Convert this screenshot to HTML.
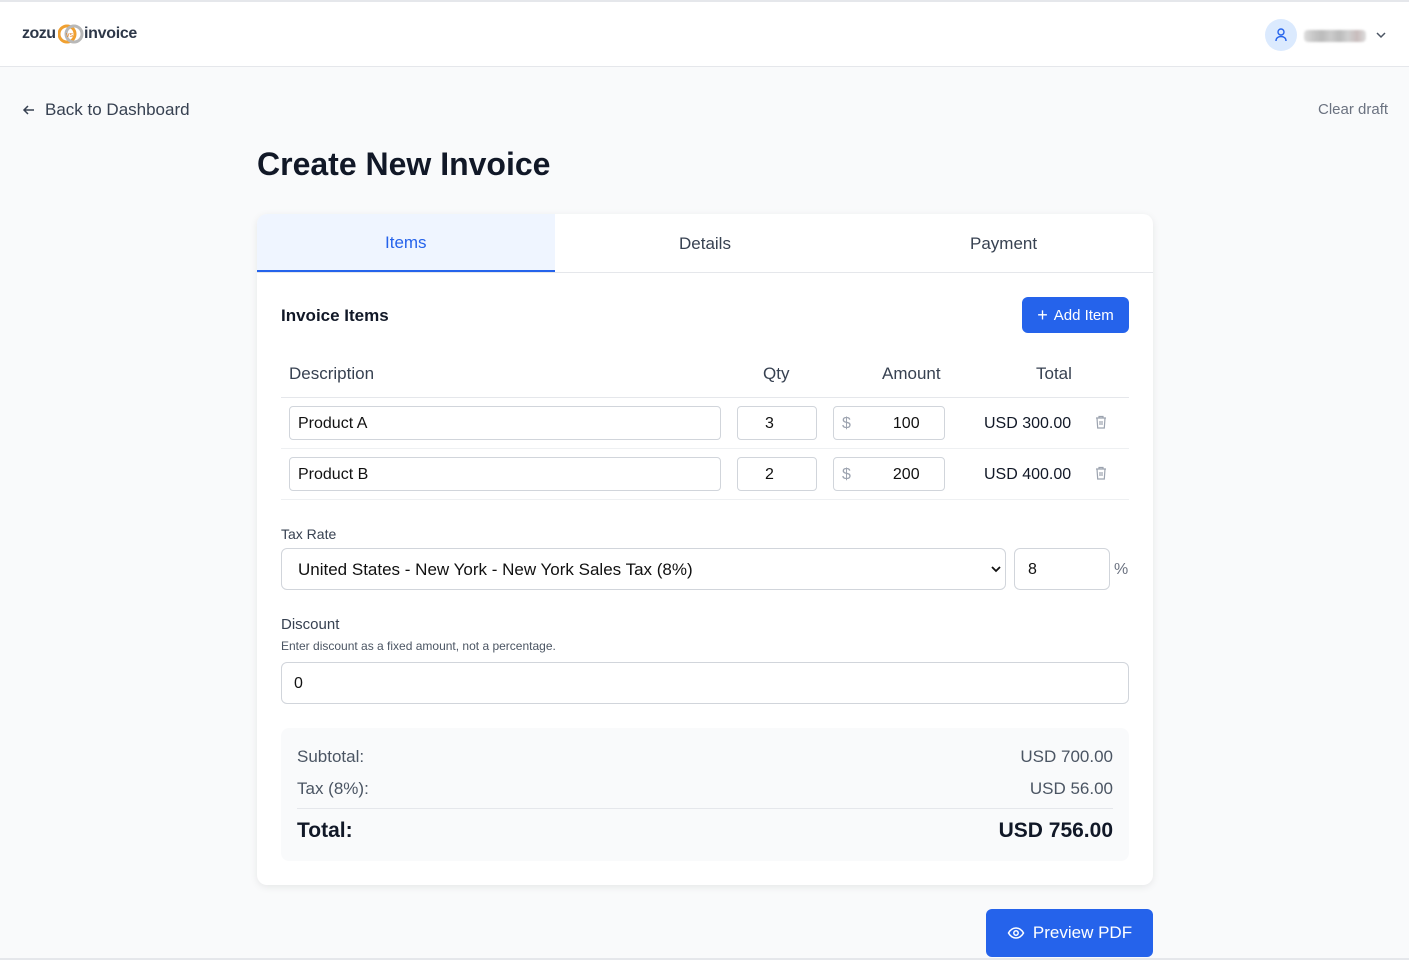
<!DOCTYPE html>
<html><head><meta charset="utf-8"><style>
*{box-sizing:border-box;margin:0;padding:0}
body{width:1409px;height:960px;overflow:hidden;background:#f9fafb;font-family:"Liberation Sans",sans-serif;color:#111827;position:relative}
.a{position:absolute}
.hdr{left:0;top:0;width:1409px;height:67px;background:#fff;border-top:2px solid #e5e7eb;border-bottom:1px solid #e5e7eb}
.card{left:257px;top:214px;width:896px;height:671px;background:#fff;border-radius:10px;box-shadow:0 2px 8px rgba(0,0,0,.08)}
.inp{position:absolute;border:1px solid #d1d5db;border-radius:4px;background:#fff;font-size:16px;color:#111;display:flex;align-items:center;padding-top:2px}
.t16{font-size:16px}
</style></head><body>
<div class="a hdr">
 <div class="a" style="left:22px;top:23px;font-size:16px;font-weight:bold;color:#2d3748;letter-spacing:-0.5px">zozu</div>
 <svg class="a" style="left:58px;top:20px" width="26" height="24" viewBox="0 0 26 24"><circle cx="9" cy="12" r="8" fill="none" stroke="#f0a030" stroke-width="3"/><circle cx="16" cy="12" r="8" fill="none" stroke="#b8b8b8" stroke-width="3"/><text x="8" y="15" font-size="7" fill="#e08020" font-family="Liberation Sans">vs</text></svg>
 <div class="a" style="left:84px;top:23px;font-size:16px;font-weight:bold;color:#2d3748;letter-spacing:-0.3px">invoice</div>
 <div class="a" style="left:1265px;top:17px;width:32px;height:32px;border-radius:50%;background:#dbeafe"></div>
 <svg class="a" style="left:1273px;top:25px" width="16" height="16" viewBox="0 0 16 16" fill="none" stroke="#2563eb" stroke-width="1.4"><circle cx="8" cy="5" r="3"/><path d="M3 14c0-3 2-4.5 5-4.5s5 1.5 5 4.5"/></svg>
 <div class="a" style="left:1304px;top:28px;width:62px;height:12px;background:linear-gradient(90deg,#ddd,#c8c8c8,#bbb,#ccc,#bbb,#d0d0d0,#c8bcbc,#ddd);border-radius:4px;filter:blur(1px)"></div>
 <svg class="a" style="left:1375px;top:28px" width="12" height="10" viewBox="0 0 12 10" fill="none" stroke="#4b5563" stroke-width="1.5"><path d="M2 3l4 4 4-4"/></svg>
</div>
<svg class="a" style="left:21px;top:102px" width="16" height="16" viewBox="0 0 16 16" fill="none" stroke="#374151" stroke-width="1.5"><path d="M13 8H3M7 4L3 8l4 4"/></svg>
<div class="a" style="left:45px;top:100px;font-size:17px;color:#374151">Back to Dashboard</div>
<div class="a" style="left:1318px;top:101px;font-size:15px;color:#6b7280">Clear draft</div>
<div class="a" style="left:257px;top:146px;font-size:32px;font-weight:bold;color:#111827">Create New Invoice</div>

<div class="a card">
 <div class="a" style="left:0;top:0;width:298px;height:58px;background:#eff5ff;border-radius:10px 0 0 0;border-bottom:2px solid #2563eb"></div>
 <div class="a" style="left:0;top:58px;width:896px;height:1px;background:#e5e7eb"></div>
 <div class="a t16" style="left:128px;top:19px;color:#2563eb;font-size:17px">Items</div>
 <div class="a" style="left:422px;top:20px;color:#374151;font-size:17px">Details</div>
 <div class="a" style="left:713px;top:20px;color:#374151;font-size:17px">Payment</div>
 <div class="a" style="left:24px;top:92px;font-size:17px;font-weight:bold">Invoice Items</div>
 <div class="a" style="left:765px;top:83px;width:107px;height:36px;background:#2563eb;border-radius:6px;color:#fff;font-size:15px;display:flex;align-items:center;justify-content:center"><span style="font-size:18px;margin-right:6px">+</span>Add Item</div>
 <div class="a" style="left:32px;top:150px;font-size:17px;color:#374151">Description</div>
 <div class="a" style="left:506px;top:150px;font-size:17px;color:#374151">Qty</div>
 <div class="a" style="left:625px;top:150px;font-size:17px;color:#374151">Amount</div>
 <div class="a" style="left:779px;top:150px;font-size:17px;color:#374151">Total</div>
 <div class="a" style="left:24px;top:183px;width:848px;height:1px;background:#e5e7eb"></div>
 <div class="a" style="left:24px;top:234px;width:848px;height:1px;background:#eef0f2"></div>
 <div class="a" style="left:24px;top:285px;width:848px;height:1px;background:#eef0f2"></div>

 <div class="inp" style="left:32px;top:192px;width:432px;height:34px;padding-left:8px">Product A</div>
 <div class="inp" style="left:480px;top:192px;width:80px;height:34px;padding-left:27px">3</div>
 <div class="inp" style="left:576px;top:192px;width:112px;height:34px;padding-left:8px"><span style="color:#9ca3af">$</span><span style="margin-left:42px">100</span></div>
 <div class="a t16" style="left:727px;top:201px">USD 300.00</div>
 <div class="inp" style="left:32px;top:243px;width:432px;height:34px;padding-left:8px">Product B</div>
 <div class="inp" style="left:480px;top:243px;width:80px;height:34px;padding-left:27px">2</div>
 <div class="inp" style="left:576px;top:243px;width:112px;height:34px;padding-left:8px"><span style="color:#9ca3af">$</span><span style="margin-left:42px">200</span></div>
 <div class="a t16" style="left:727px;top:252px">USD 400.00</div>
 <svg class="a" style="left:836px;top:200px" width="16" height="16" viewBox="0 0 16 16" fill="none" stroke="#9ca3af" stroke-width="1.2"><path d="M3 4h10M6 4V2.5h4V4M4 4l.7 10h6.6L12 4M7 7v4M9 7v4"/></svg>
 <svg class="a" style="left:836px;top:251px" width="16" height="16" viewBox="0 0 16 16" fill="none" stroke="#9ca3af" stroke-width="1.2"><path d="M3 4h10M6 4V2.5h4V4M4 4l.7 10h6.6L12 4M7 7v4M9 7v4"/></svg>

 <div class="a" style="left:24px;top:312px;font-size:14px;color:#374151">Tax Rate</div>
 <div class="inp" style="left:24px;top:334px;width:725px;height:42px;border-radius:6px;padding-left:16px;font-size:17px">United States - New York - New York Sales Tax (8%)
  <svg style="position:absolute;right:4px;top:16px" width="10" height="8" viewBox="0 0 10 8" fill="none" stroke="#111" stroke-width="1.8"><path d="M1 2l4 4 4-4"/></svg></div>
 <div class="inp" style="left:757px;top:334px;width:96px;height:42px;border-radius:6px;padding-left:13px">8</div>
 <div class="a t16" style="left:857px;top:347px;color:#6b7280">%</div>
 <div class="a" style="left:24px;top:402px;font-size:15px;color:#374151">Discount</div>
 <div class="a" style="left:24px;top:425px;font-size:12px;color:#4b5563">Enter discount as a fixed amount, not a percentage.</div>
 <div class="inp" style="left:24px;top:448px;width:848px;height:42px;border-radius:6px;padding-left:12px">0</div>

 <div class="a" style="left:24px;top:514px;width:848px;height:133px;background:#f9fafb;border-radius:8px"></div>
 <div class="a t16" style="left:40px;top:533px;color:#4b5563;font-size:17px">Subtotal:</div>
 <div class="a t16" style="right:40px;top:533px;color:#4b5563;font-size:17px">USD 700.00</div>
 <div class="a t16" style="left:40px;top:565px;color:#4b5563;font-size:17px">Tax (8%):</div>
 <div class="a t16" style="right:40px;top:565px;color:#4b5563;font-size:17px">USD 56.00</div>
 <div class="a" style="left:40px;top:594px;width:816px;height:1px;background:#e5e7eb"></div>
 <div class="a" style="left:40px;top:605px;font-size:21px;font-weight:bold">Total:</div>
 <div class="a" style="right:40px;top:605px;font-size:21px;font-weight:bold">USD 756.00</div>
</div>

<div class="a" style="left:986px;top:909px;width:167px;height:48px;background:#2563eb;border-radius:6px;color:#fff;font-size:17px;display:flex;align-items:center;justify-content:center">
 <svg width="18" height="14" viewBox="0 0 18 14" fill="none" stroke="#fff" stroke-width="1.5" style="margin-right:8px"><path d="M1.5 7C3.5 3.5 6 2 9 2s5.5 1.5 7.5 5c-2 3.5-4.5 5-7.5 5S3.5 10.5 1.5 7z"/><circle cx="9" cy="7" r="2.2"/></svg>Preview PDF</div>
<div class="a" style="left:0;top:958px;width:1409px;height:2px;background:#e5e7eb"></div>
</body></html>
